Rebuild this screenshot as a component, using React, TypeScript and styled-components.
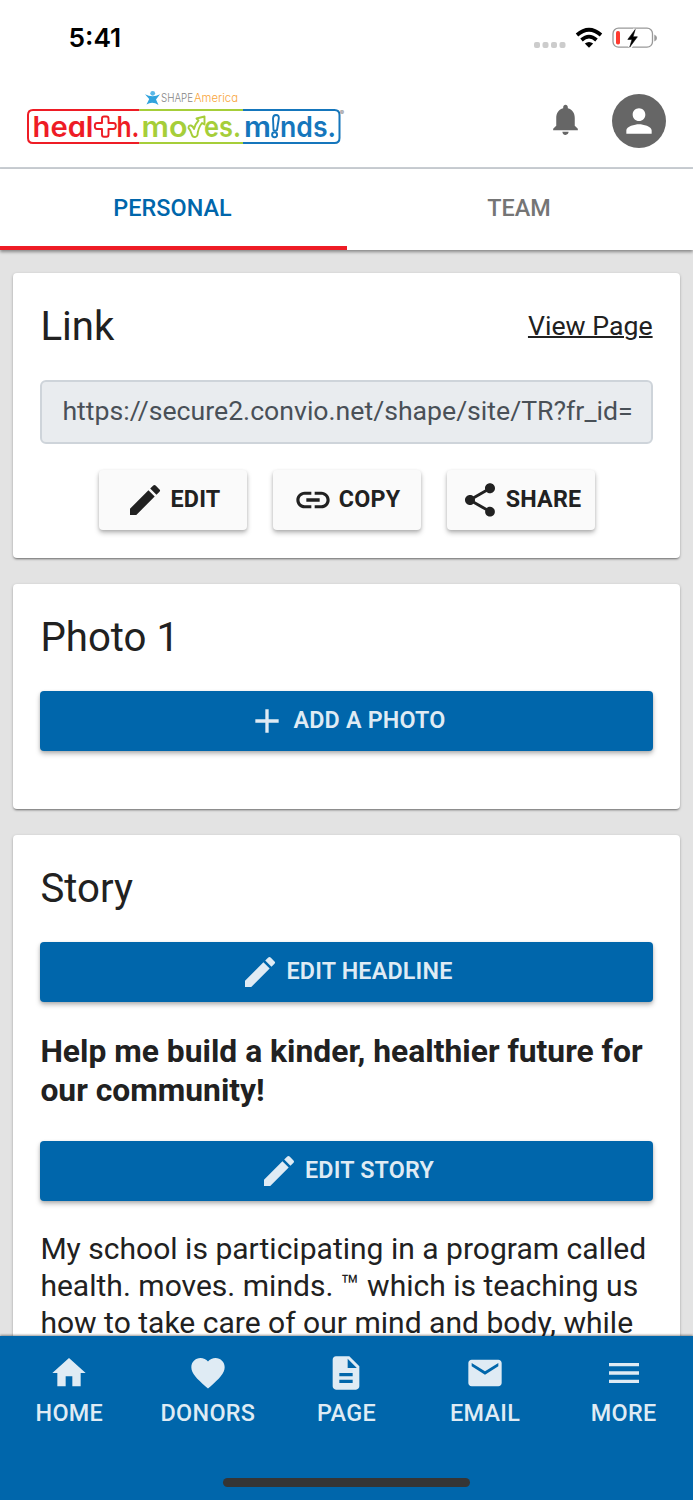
import React from "react";
import styled, { createGlobalStyle } from "styled-components";
import { MdNotifications, MdPerson, MdEdit, MdLink, MdShare, MdAdd, MdHome, MdFavorite, MdDescription, MdEmail, MdMenu } from "react-icons/md";

const Global = createGlobalStyle`
  * { box-sizing: border-box; }
  body { margin: 0; background: #e3e3e3; font-family: Roboto, "Liberation Sans", sans-serif; color: #212121; }
  svg { display: block; flex: none; }
`;

const Screen = styled.div`
  width: 693px;
  height: 1500px;
  overflow: hidden;
  display: flex;
  flex-direction: column;
`;

const StatusBar = styled.div`
  height: 76px;
  flex: none;
  background: #fff;
  display: flex;
  justify-content: space-between;
  align-items: center;
  padding: 0 35px 0 68.5px;
`;

const Clock = styled.span`
  font: 600 26.3px/32px Inter, sans-serif;
  color: #000;
`;

const Header = styled.header`
  height: 93px;
  flex: none;
  background: #fff;
  border-bottom: 2px solid #c9ced3;
  display: flex;
  justify-content: space-between;
  align-items: flex-start;
  padding: 12px 27px 0 25px;
`;

const HeaderActions = styled.div`
  display: flex;
  align-items: center;
  gap: 28px;
  padding-top: 5.5px;
  color: #666;
`;

const Bell = styled(MdNotifications)`
  margin-bottom: 2px;
`;

const Avatar = styled.div`
  width: 54px;
  height: 54px;
  border-radius: 50%;
  background: #666;
  color: #fff;
  display: flex;
  align-items: center;
  justify-content: center;
`;

const Tabs = styled.nav`
  height: 80.5px;
  flex: none;
  background: #fff;
  display: flex;
  box-shadow: 0 2px 3px rgba(0, 0, 0, 0.4);
  position: relative;
`;

const Tab = styled.div<{ $active?: boolean }>`
  flex: 1;
  display: flex;
  align-items: center;
  justify-content: center;
  padding: 1px 1.5px 0 0;
  font-size: 23.4px;
  font-weight: 500;
  letter-spacing: 0.05px;
  color: ${(p) => (p.$active ? "#0066ab" : "#757575")};
  border-bottom: 4px solid ${(p) => (p.$active ? "#ee1c25" : "#fff")};
`;

const Content = styled.main`
  flex: 1;
  min-height: 0;
  overflow: hidden;
  padding: 23.5px 13.4px 0;
  display: flex;
  flex-direction: column;
  gap: 26.4px;
`;

const Card = styled.section<{ $height: number }>`
  height: ${(p) => p.$height}px;
  flex: none;
  background: #fff;
  border-radius: 4px;
  padding: 27px 27px 0;
  box-shadow: 0 2px 2px -1px rgba(0, 0, 0, 0.34), 0 1px 3px rgba(0, 0, 0, 0.26);
`;

const CardHead = styled.div`
  display: flex;
  align-items: center;
  justify-content: space-between;
  height: 53px;
  margin-bottom: 27px;
`;

const Title = styled.h2`
  margin: 0;
  font-size: 40.2px;
  font-weight: 400;
`;

const ViewLink = styled.a`
  font-size: 26.7px;
  padding-bottom: 1px;
  text-decoration: underline;
  text-decoration-thickness: 2px;
`;

const UrlField = styled.div`
  height: 63.5px;
  border: 2px solid #ced4da;
  border-radius: 6px;
  background: #e9ecef;
  color: #495057;
  font-size: 26.65px;
  line-height: 59px;
  padding: 0 20px;
  white-space: nowrap;
  overflow: hidden;
`;

const ButtonRow = styled.div`
  display: flex;
  justify-content: center;
  gap: 26px;
  margin-top: 26.5px;
`;

const Button = styled.div<{ $primary?: boolean }>`
  width: ${(p) => (p.$primary ? "100%" : "148px")};
  height: 60px;
  display: flex;
  align-items: center;
  justify-content: center;
  gap: 6px;
  padding-bottom: ${(p) => (p.$primary ? 2 : 3)}px;
  border-radius: 4px;
  font-size: 23.3px;
  font-weight: ${(p) => (p.$primary ? 600 : 700)};
  letter-spacing: 0.2px;
  background: ${(p) => (p.$primary ? "#0066ab" : "#fafafa")};
  color: ${(p) => (p.$primary ? "#dfebf4" : "#212121")};
  box-shadow: 0 3px 5px rgba(0, 0, 0, 0.25), 0 1px 3px rgba(0, 0, 0, 0.12);
  svg { margin-top: 2px; }
`;

const Headline = styled.h3`
  margin: 30px 0 31px;
  font-size: 31.8px;
  line-height: 39px;
  font-weight: 700;
  white-space: nowrap;
`;

const Story = styled.p`
  margin: 30px 0 0;
  font-size: 30.05px;
  line-height: 36.8px;
  white-space: nowrap;
`;

const BottomNav = styled.nav`
  height: 164.5px;
  flex: none;
  background: #0066ab;
  box-shadow: 0 -1px 2px rgba(0, 0, 0, 0.4);
  position: relative;
  display: flex;
  flex-direction: column;
  align-items: center;
  justify-content: space-between;
  padding: 17px 0 13.5px;
`;

const NavItems = styled.div`
  display: flex;
  align-self: stretch;
`;

const NavItem = styled.div`
  flex: 1;
  display: flex;
  flex-direction: column;
  align-items: center;
  gap: 6.5px;
  font-size: 23.4px;
  line-height: 28px;
  font-weight: 500;
  letter-spacing: 0.3px;
  color: #dfebf4;
`;

const HomeIndicator = styled.div`
  width: 247px;
  height: 8.5px;
  border-radius: 5px;
  background: #353535;
`;

const bolt = "M635.2 29.500 L627.800 39.400 H632 L629.800 47 L637.400 36.800 H633Z";

const Status = () => (
  <svg width="124" height="32" viewBox="534 22 124 32">
    {[534, 542.5, 551, 559.5].map((x) => (
      <rect key={x} x={x} y="42" width="6" height="6" rx="2" fill="#ccc" />
    ))}
    <g fill="none" stroke="#000" strokeWidth="3.7">
      <path d="M577 35 Q589 24.5 601 35" />
      <path d="M581.5 40 Q589 33.3 596.5 40" />
    </g>
    <path d="M584.8 43.6 Q589 40.2 593.2 43.6 L589 47.8Z" />
    <rect x="613" y="28.2" width="39.5" height="19" rx="5.5" fill="none" stroke="#999" strokeWidth="1.3" />
    <path d="M654.3 34.5 Q657 35.5 657 38 Q657 40.5 654.3 41.5Z" fill="#999" />
    <rect x="616" y="31" width="4" height="13.5" rx="1.8" fill="#ff3b30" />
    <path d={bolt} stroke="#fff" strokeWidth="4" />
    <path d={bolt} stroke="#000" strokeWidth=".6" />
  </svg>
);

const LogoText = styled.text<{ $light?: boolean }>`
  font-family: Inter, sans-serif;
  font-feature-settings: "cv11" 1;
  font-weight: ${(p) => (p.$light ? 300 : 600)};
`;

const Logo = () => (
  <svg width="322" height="60" viewBox="25 88 322 60">
    <g fill="none" strokeWidth="2">
      <path d="M139.5 110 H33 Q28 110 28 115 V138 Q28 143 33 143 H139.5" stroke="#ee1c25" />
      <path d="M139.5 110 H243 M139.5 143 H243" stroke="#a6ce39" />
      <path d="M243 110 H334.5 Q339.5 110 339.5 115 V138 Q339.5 143 334.5 143 H243" stroke="#1576bc" />
    </g>
    <circle cx="152.7" cy="93.3" r="2.4" fill="#5ab8e8" />
    <path d="M145 94.3 Q152.5 98 160 94.3 L156 99.5 L158.5 105 Q152.5 101 146.500 104.5 L149.2 99Z" fill="#31a3dd" />
    <LogoText $light x="161" y="102" fontSize="11.5" fill="#858585" textLength="32" lengthAdjust="spacingAndGlyphs">SHAPE</LogoText>
    <LogoText $light x="194" y="102" fontSize="11.5" fill="#f9a53a" textLength="44" lengthAdjust="spacingAndGlyphs">America</LogoText>
    <g fontSize="28.5">
      <LogoText x="32.5" y="136.5" fill="#ee1c25" textLength="61" lengthAdjust="spacingAndGlyphs">heal</LogoText>
      <LogoText x="116.5" y="136.5" fill="#ee1c25" textLength="23" lengthAdjust="spacingAndGlyphs">h.</LogoText>
      <LogoText x="141.5" y="136.5" fill="#a6ce39" textLength="46" lengthAdjust="spacingAndGlyphs">mo</LogoText>
      <LogoText x="204" y="136.5" fill="#a6ce39" textLength="37" lengthAdjust="spacingAndGlyphs">es.</LogoText>
      <LogoText x="244" y="136.5" fill="#1576bc" textLength="27" lengthAdjust="spacingAndGlyphs">m</LogoText>
      <LogoText x="280" y="136.5" fill="#1576bc" textLength="56" lengthAdjust="spacingAndGlyphs">nds.</LogoText>
    </g>
    <g fill="#fff" strokeWidth="1.9" strokeLinejoin="round">
      <path d="M104 116.500 H106.500 Q108.500 116.500 108.500 118.500 V123 H113.500 Q115.800 123 115.800 126 Q115.800 129 113.500 129 H108.500 V134.500 Q108.500 136.800 106.500 136.800 H104 Q102 136.800 102 134.500 V129 H97 Q94.800 129 94.800 126 Q94.800 123 97 123 H102 V118.500 Q102 116.500 104 116.500Z" stroke="#ee1c25" />
      <path d="M188.500 128 Q188.500 125 191 125.500 Q193 126 194 129 Q195.500 123.500 198.500 120.500 L196.500 118.500 L204.500 116.500 L204.500 124.500 L202 123 Q198 128 197.500 135 Q196.500 137.500 194.500 137 Q192.500 137 191.800 134.500 Q190.500 130 188.500 128Z" stroke="#a6ce39" />
      <path d="M273 118.500 Q273.200 115 276 115 Q279.200 115 278.800 118.500 L277 130 Q275.500 131.500 273.500 130Z" stroke="#1576bc" />
      <circle cx="274.6" cy="134.7" r="2.5" stroke="#1576bc" />
    </g>
    <text x="339.8" y="114.5" fontSize="6.5" fill="#777" fontFamily="Inter">®</text>
  </svg>
);

const navItems = [
  { label: "HOME", Icon: MdHome },
  { label: "DONORS", Icon: MdFavorite },
  { label: "PAGE", Icon: MdDescription },
  { label: "EMAIL", Icon: MdEmail },
  { label: "MORE", Icon: MdMenu },
];

export default function App() {
  return (
    <Screen>
      <Global />
      <StatusBar>
        <Clock>5:41</Clock>
        <Status />
      </StatusBar>
      <Header>
        <Logo />
        <HeaderActions>
          <Bell size={37} />
          <Avatar><MdPerson size={38} /></Avatar>
        </HeaderActions>
      </Header>
      <Tabs>
        <Tab $active>PERSONAL</Tab>
        <Tab>TEAM</Tab>
      </Tabs>
      <Content>
        <Card $height={284.6}>
          <CardHead>
            <Title>Link</Title>
            <ViewLink>View Page</ViewLink>
          </CardHead>
          <UrlField>https://secure2.convio.net/shape/site/TR?fr_id=</UrlField>
          <ButtonRow>
            <Button><MdEdit size={40} />EDIT</Button>
            <Button><MdLink size={40} />COPY</Button>
            <Button><MdShare size={40} />SHARE</Button>
          </ButtonRow>
        </Card>
        <Card $height={224.6}>
          <CardHead><Title>Photo 1</Title></CardHead>
          <Button $primary><MdAdd size={40} />ADD A PHOTO</Button>
        </Card>
        <Card $height={700}>
          <CardHead><Title>Story</Title></CardHead>
          <Button $primary><MdEdit size={40} />EDIT HEADLINE</Button>
          <Headline>Help me build a kinder, healthier future for<br />our community!</Headline>
          <Button $primary><MdEdit size={40} />EDIT STORY</Button>
          <Story>
            My school is participating in a program called<br />
            health. moves. minds. ™ which is teaching us<br />
            how to take care of our mind and body, while
          </Story>
        </Card>
      </Content>
      <BottomNav>
        <NavItems>
          {navItems.map(({ label, Icon }) => (
            <NavItem key={label}><Icon size={40} />{label}</NavItem>
          ))}
        </NavItems>
        <HomeIndicator />
      </BottomNav>
    </Screen>
  );
}
